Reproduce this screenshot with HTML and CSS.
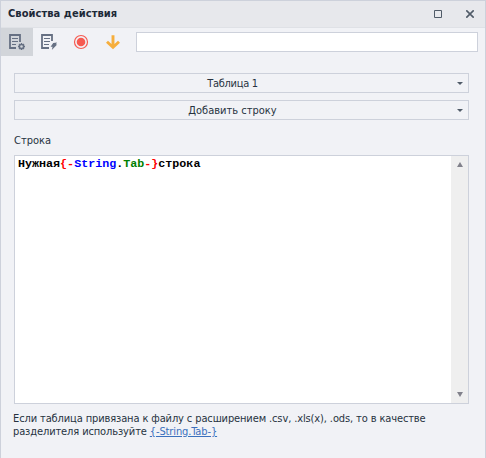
FILE: index.html
```html
<!DOCTYPE html>
<html lang="ru">
<head>
<meta charset="utf-8">
<title>Свойства действия</title>
<link rel="stylesheet" href="styles.css">
</head>
<body>
<div class="window">
  <header class="titlebar">
    <h1 class="title">Свойства действия</h1>
    <svg class="maximize" width="8" height="8" viewBox="0 0 8 8"><path d="M.5.5h7v7h-7z"/></svg>
    <svg class="close" width="8" height="8" viewBox="0 0 8 8"><path d="M.3.3l7.4 7.4M7.7.3L.3 7.7"/></svg>
  </header>
  <div class="toolbar">
    <button class="tool active" aria-label="Свойства">
      <svg width="18" height="18" viewBox="0 0 18 18">
        <path class="line" d="M8 14H2V1h10v7"/><path class="rule" d="M4 4.5h6M4 7.5h6M4 10.5h4"/>
        <circle class="gear" cx="13.5" cy="12.5" r="2.1"/>
        <path class="teeth" d="M13.5 9v1.3M13.5 14.7V16M10 12.5h1.3M15.7 12.5H17M11 10l.9.9M15.1 14.1l.9.9M16 10l-.9.9M11.9 14.1l-.9.9"/>
      </svg>
    </button>
    <button class="tool" aria-label="События">
      <svg width="18" height="18" viewBox="0 0 18 18">
        <path class="line" d="M9 14H2V1h10v6"/><path class="rule" d="M4 4.5h6M4 7.5h6M4 10.5h5"/>
        <path class="bolt" d="M13.2 9L17 8.5l-1.2 2.1h1.4L11.8 16l.8-3.2h-2z"/>
      </svg>
    </button>
    <button class="tool" aria-label="Запись">
      <svg width="18" height="18" viewBox="0 0 18 18">
        <circle class="ring" cx="9" cy="8" r="6.5"/><circle class="dot" cx="9" cy="8" r="4.3"/>
      </svg>
    </button>
    <button class="tool" aria-label="Вниз">
      <svg width="18" height="18" viewBox="0 0 18 18"><path class="arrow" d="M9 1.2V13M3 7.8L9 13.3l6-5.5"/></svg>
    </button>
    <input class="search" type="text" aria-label="Поиск">
  </div>
  <main class="content">
    <div class="select"><span class="tight">Таблица 1</span><i class="caret"></i></div>
    <div class="select"><span>Добавить строку</span><i class="caret"></i></div>
    <div class="label">Строка</div>
    <div class="editor">
      <code class="code">Нужная<span class="red">{-</span><span class="blue">String</span>.<span class="green">Tab</span><span class="red">-}</span>строка</code>
      <div class="scrollbar"><i class="up"></i><i class="down"></i></div>
    </div>
    <p class="hint">Если таблица привязана к файлу с расширением .csv, .xls(x), .ods, то в качестве<br>разделителя используйте <a class="link">{-String.Tab-}</a></p>
  </main>
</div>
</body>
</html>
```
FILE: styles.css
```css
* { box-sizing: border-box; }
body { margin: 0; font: 11px/13px "DejaVu Sans Condensed", "Noto Sans", sans-serif; color: #27323f; }
.window { height: 458px; border: 1px solid #cdd1db; border-bottom: 0; background: #f1f2f6; }
.titlebar { display: flex; align-items: center; height: 27px; padding: 0 11px 0 7px; background: #e7e8ec; border-bottom: 1px solid #dfe1e6; }
.title { flex: 1; margin: 0; font: bold 11px/14px "DejaVu Sans Condensed", sans-serif; letter-spacing: 0.07px; color: #1d2938; white-space: nowrap; }
.maximize, .close { fill: none; stroke: #505b68; stroke-width: 1; }
.close { margin-left: 24px; stroke-width: 1.6; }
.toolbar { display: flex; height: 28px; padding-right: 7px; }
.tool { display: flex; align-items: flex-start; width: 32px; padding: 6px 0 0 7px; border: 0; background: none; }
.tool.active { background: #d2d5da; }
.tool svg { flex: none; }
.line { fill: none; stroke: #667083; stroke-width: 1.8; }
.rule { stroke: #667083; stroke-width: 1.2; }
.gear { fill: none; stroke: #667083; stroke-width: 1.5; }
.teeth { stroke: #667083; stroke-width: 1.3; }
.bolt { fill: #667083; }
.ring { fill: none; stroke: #f65a50; stroke-width: 1.2; }
.dot { fill: #f65a50; }
.arrow { fill: none; stroke: #f6ae3c; stroke-width: 2.9; }
.search { flex: 1; min-width: 0; height: 20px; margin: 4px 0 0 7px; border: 1px solid #cdd1db; background: #fff; }
.content { padding: 17px 16px 0 13px; }
.select { display: flex; align-items: center; height: 20px; margin-bottom: 7px; padding-right: 5px; border: 1px solid #cdd1db; white-space: nowrap; }
.select span { flex: 1; padding-right: 7px; text-align: center; }
.select .tight { letter-spacing: -0.3px; }
.caret { border: 3px solid transparent; border-top-color: #505b68; border-bottom: 0; }
.label { margin: 14px 0 8px; }
.editor { display: flex; height: 249px; border: 1px solid #cdd1db; background: #fff; }
.code { flex: 1; padding: 2px 0 0 3px; font: bold 11.7px/13px "Liberation Mono", monospace; color: #000; white-space: pre; }
.red { color: #f00; }
.blue { color: #00f; }
.green { color: #008000; }
.scrollbar { display: flex; flex-direction: column; justify-content: space-between; align-items: center; width: 17px; padding: 6px 0; background: #efefef; }
.up, .down { border: 3.5px solid transparent; }
.up { border-top: 0; border-bottom: 5px solid #81818b; }
.down { border-bottom: 0; border-top: 5px solid #81818b; }
.hint { margin: 8px 0 0 -1px; letter-spacing: -0.12px; white-space: nowrap; }
.link { color: #3b70bd; text-decoration: underline; }
```
